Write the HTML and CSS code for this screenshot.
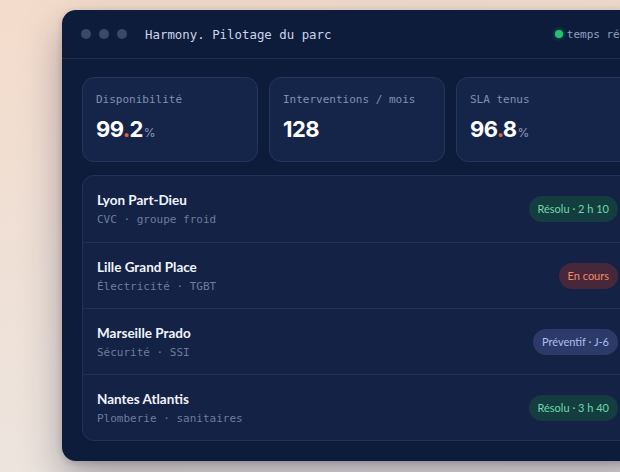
FILE: index.html
```html
<!DOCTYPE html>
<html lang="fr">
<head>
<meta charset="utf-8">
<link rel="stylesheet" href="styles.css">
</head>
<body>
<div class="window">
  <div class="titlebar">
    <span class="dot"></span><span class="dot"></span><span class="dot"></span>
    <span class="title">Harmony. Pilotage du parc</span>
    <span class="live"><span class="live-dot"></span>temps réel</span>
  </div>
  <div class="content">
    <div class="stats">
      <div class="stat">
        <div class="label">Disponibilité</div>
        <div class="value">99<span class="pt">.</span>2<span class="unit">%</span></div>
      </div>
      <div class="stat">
        <div class="label">Interventions / mois</div>
        <div class="value">128</div>
      </div>
      <div class="stat">
        <div class="label">SLA tenus</div>
        <div class="value">96<span class="pt">.</span>8<span class="unit">%</span></div>
      </div>
    </div>
    <div class="list">
      <div class="row">
        <div class="info"><div class="name">Lyon Part-Dieu</div><div class="sub">CVC · groupe froid</div></div>
        <span class="badge ok">Résolu · 2 h 10</span>
      </div>
      <div class="row">
        <div class="info"><div class="name">Lille Grand Place</div><div class="sub">Électricité · TGBT</div></div>
        <span class="badge run">En cours</span>
      </div>
      <div class="row">
        <div class="info"><div class="name">Marseille Prado</div><div class="sub">Sécurité · SSI</div></div>
        <span class="badge prev">Préventif · J-6</span>
      </div>
      <div class="row">
        <div class="info"><div class="name">Nantes Atlantis</div><div class="sub">Plomberie · sanitaires</div></div>
        <span class="badge ok">Résolu · 3 h 40</span>
      </div>
    </div>
  </div>
</div>
</body>
</html>
```
FILE: styles.css
```css
html, body { margin: 0; height: 100%; }
body {
  width: 620px;
  height: 472px;
  overflow: hidden;
  background: linear-gradient(170deg, #f4dccb 0%, #efe0d6 45%, #ebe6e1 100%);
  padding: 10px 0 0 62px;
  box-sizing: border-box;
}
.window {
  width: 590px;
  height: 451px;
  background: #0e1c3c;
  border-radius: 14px;
  box-shadow: 0 18px 40px rgba(30, 30, 60, 0.35), 0 2px 6px rgba(30,30,60,0.2);
  overflow: hidden;
}
.titlebar {
  height: 48px;
  display: flex;
  align-items: center;
  padding: 0 19px 0 19px;
  border-bottom: 1px solid #1f2e52;
  font-family: "DejaVu Sans Mono", monospace;
}
.dot {
  width: 10px; height: 10px; border-radius: 50%;
  background: #3b4866;
  margin-right: 8px;
}
.title {
  margin-left: 10px;
  color: #ccd5e8;
  font-size: 12.4px;
}
.live {
  margin-left: auto;
  display: flex;
  align-items: center;
  color: #8fa0bf;
  font-size: 11px;
  white-space: nowrap;
}
.live-dot {
  width: 8px; height: 8px; border-radius: 50%;
  background: #22c472;
  margin-right: 4px;
  box-shadow: 0 0 4px rgba(34,196,114,0.6);
}
.content { padding: 18px 20px 0 20px; }
.stats {
  display: grid;
  grid-template-columns: repeat(3, 176px);
  gap: 11px;
}
.stat {
  height: 85px;
  box-sizing: border-box;
  background: #15254a;
  border: 1px solid #25365c;
  border-radius: 12px;
  padding: 15px 14px 0 13px;
}
.label {
  font-family: "DejaVu Sans Mono", monospace;
  font-size: 11px;
  color: #8190b0;
}
.value {
  margin-top: 10px;
  font-family: "Inter", sans-serif;
  font-weight: 700;
  font-size: 22px;
  letter-spacing: -0.6px;
  color: #ffffff;
}
.pt { color: #e5603c; }
.unit { font-size: 12px; font-weight: 400; color: #8f9cbb; letter-spacing: 0; margin-left: 1px; }
.list {
  margin-top: 13px;
  background: #132245;
  border: 1px solid #22325a;
  border-radius: 12px;
}
.row {
  height: 66px;
  box-sizing: border-box;
  display: flex;
  align-items: center;
  padding: 0 13px 0 14px;
  border-top: 1px solid #203057;
}
.row:first-child { border-top: none; }
.info { flex: 1; }
.name {
  font-family: "Lato", sans-serif;
  font-weight: 700;
  font-size: 13.5px;
  color: #f2f4fa;
}
.sub {
  margin-top: 5px;
  font-family: "DejaVu Sans Mono", monospace;
  font-size: 11px;
  color: #6e7d9d;
}
.badge {
  font-family: "Lato", sans-serif;
  font-size: 11px;
  padding: 6px 9px 7px;
  border-radius: 13px;
  white-space: nowrap;
}
.ok { background: #143d3f; color: #6fd9a9; }
.run { background: #46283a; color: #f28a68; }
.prev { background: #2b3a68; color: #aebdf2; }
```
